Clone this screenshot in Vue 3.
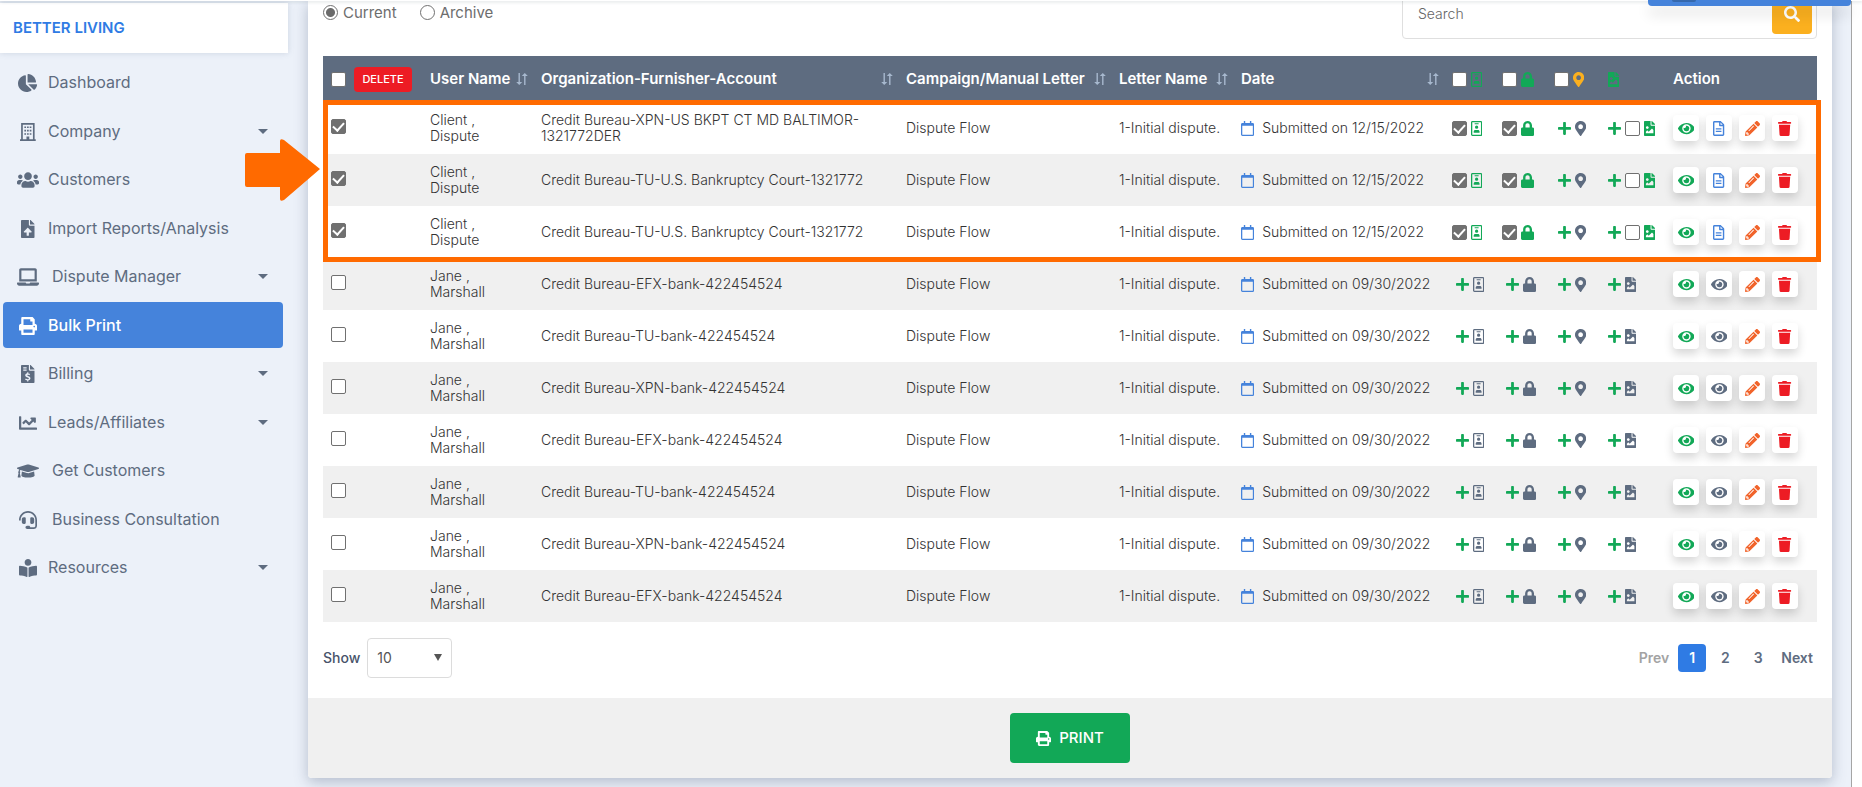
<script setup>
import { reactive, ref } from 'vue'

const icons = {
  pie: ['0 0 544 512', 'M527.79 288H290.5l158.03 158.03c6.04 6.04 15.98 6.53 22.19.68 38.7-36.46 65.32-85.61 73.13-140.86 1.34-9.46-6.51-17.85-16.06-17.85zm-15.83-64.8C503.72 103.74 408.26 8.28 288.8.04 279.68-.59 272 7.1 272 16.24V240h223.77c9.14 0 16.82-7.68 16.19-16.8zM224 288V50.71c0-9.55-8.39-17.4-17.84-16.06C86.99 51.49-4.1 155.6.14 280.37 4.5 408.51 114.83 513.59 243.03 511.98c50.4-.63 96.97-16.87 135.26-44.03 7.9-5.6 8.42-17.23 1.57-24.08L224 288z'],
  building: ['0 0 448 512', 'M32 0h384v464h32v48H0v-48h32zM80 48v416h104v-80h80v80h104V48zM124 96h48v48h-48zm76 0h48v48h-48zm76 0h48v48h-48zM124 192h48v48h-48zm76 0h48v48h-48zm76 0h48v48h-48zM124 288h48v48h-48zm76 0h48v48h-48zm76 0h48v48h-48z'],
  users: ['0 0 640 512', 'M96 224c35.3 0 64-28.7 64-64s-28.7-64-64-64-64 28.7-64 64 28.7 64 64 64zm448 0c35.3 0 64-28.7 64-64s-28.7-64-64-64-64 28.7-64 64 28.7 64 64 64zm32 32h-64c-17.6 0-33.5 7.1-45.1 18.6 40.3 22.1 68.9 62 75.1 109.4h66c17.7 0 32-14.3 32-32v-32c0-35.3-28.7-64-64-64zm-256 0c61.9 0 112-50.1 112-112S381.9 32 320 32 208 82.1 208 144s50.1 112 112 112zm76.8 32h-8.3c-20.8 10-43.9 16-68.5 16s-47.6-6-68.5-16h-8.3C179.6 288 128 339.6 128 403.2V432c0 26.5 21.5 48 48 48h288c26.5 0 48-21.5 48-48v-28.8c0-63.6-51.6-115.2-115.2-115.2zm-223.7-13.4C161.5 263.1 145.6 256 128 256H64c-35.3 0-64 28.7-64 64v32c0 17.7 14.3 32 32 32h65.9c6.3-47.4 34.9-87.3 75.2-109.4z'],
  upload: ['0 0 384 512', 'M224 136V0H24C10.7 0 0 10.7 0 24v464c0 13.3 10.7 24 24 24h336c13.3 0 24-10.7 24-24V160H248c-13.2 0-24-10.8-24-24zm65.18 216.01H224v80c0 8.84-7.16 16-16 16h-32c-8.84 0-16-7.16-16-16v-80H94.82c-14.28 0-21.41-17.29-11.27-27.36l96.42-95.7c6.65-6.61 17.39-6.61 24.04 0l96.42 95.7c10.15 10.07 3.03 27.36-11.25 27.36zM377 105L279.1 7c-4.5-4.5-10.6-7-17-7H256v128h128v-6.1c0-6.3-2.5-12.4-7-16.9z'],
  laptop: ['0 0 640 512', 'M624 416H381.54c-.74 19.81-14.71 32-32.74 32H288c-18.69 0-33.02-17.47-32.77-32H16c-8.8 0-16 7.2-16 16v16c0 35.2 28.8 64 64 64h512c35.2 0 64-28.8 64-64v-16c0-8.8-7.2-16-16-16zM576 48c0-26.4-21.6-48-48-48H112C85.6 0 64 21.6 64 48v336h512V48zm-64 272H128V64h384v256z'],
  print: ['0 0 512 512', 'M448 192V77.25c0-8.49-3.37-16.62-9.37-22.63L393.37 9.37c-6-6-14.14-9.37-22.63-9.37H96C78.33 0 64 14.33 64 32v160c-35.35 0-64 28.65-64 64v112c0 8.84 7.16 16 16 16h48v96c0 17.67 14.33 32 32 32h320c17.67 0 32-14.33 32-32v-96h48c8.84 0 16-7.16 16-16V256c0-35.35-28.65-64-64-64zm-64 256H128v-96h256v96zm0-224H128V64h192v48c0 8.84 7.16 16 16 16h48v96zm48 72c-13.25 0-24-10.75-24-24 0-13.26 10.75-24 24-24s24 10.74 24 24c0 13.25-10.75 24-24 24z'],
  invoice: ['0 0 384 512', 'M224 136V0H24C10.7 0 0 10.7 0 24v464c0 13.3 10.7 24 24 24h336c13.3 0 24-10.7 24-24V160H248c-13.2 0-24-10.8-24-24zM64 64h96v32H64zm0 64h96v32H64zM377 105L279.1 7c-4.5-4.5-10.6-7-17-7H256v128h128v-6.1c0-6.3-2.5-12.4-7-16.9zM176 208h32v32c24 2 40 10 52 18l-22 30c-16-10-30-14-44-14-20 0-30 8-30 18 0 34 104 16 104 86 0 32-24 54-60 60v34h-32v-34c-24-2-46-10-62-24l24-30c16 12 34 20 52 20 22 0 34-8 34-22 0-38-104-20-104-88 0-28 22-50 56-56z'],
  chart: ['0 0 512 512', 'M496 384H64V80c0-8.84-7.16-16-16-16H16C7.16 64 0 71.16 0 80v336c0 17.67 14.33 32 32 32h464c8.84 0 16-7.16 16-16v-32c0-8.84-7.16-16-16-16zM464 96H345.94c-21.38 0-32.09 25.85-16.97 40.97l32.4 32.4L288 242.75l-73.37-73.37c-12.5-12.5-32.76-12.5-45.25 0l-68.69 68.69c-6.25 6.25-6.25 16.38 0 22.63l22.62 22.62c6.25 6.25 16.38 6.25 22.63 0L192 237.25l73.37 73.37c12.5 12.5 32.76 12.5 45.25 0l96-96 32.4 32.4c15.12 15.12 40.97 4.41 40.97-16.97V112c.01-8.84-7.15-16-15.99-16z'],
  cap: ['0 0 640 512', 'M622.34 153.2L343.4 67.5c-15.2-4.67-31.6-4.67-46.79 0L17.66 153.2c-23.54 7.23-23.54 38.36 0 45.59l48.63 14.94c-10.67 13.19-17.23 29.28-17.88 46.9C38.78 266.15 32 276.11 32 288c0 10.78 5.68 19.85 13.86 25.65L20.33 428.53C18.11 438.52 25.71 448 35.94 448h56.11c10.24 0 17.84-9.48 15.62-19.47L82.14 313.65C90.32 307.85 96 298.78 96 288c0-11.57-6.47-21.25-15.66-26.87.76-15.02 8.44-28.3 20.69-36.72L296.6 284.5c9.06 2.78 26.44 6.25 46.79 0l278.95-85.7c23.55-7.24 23.55-38.36 0-45.6zM352.79 315.09c-28.53 8.76-52.84 3.92-65.59 0l-145.02-44.55L128 384c0 35.35 85.96 64 192 64s192-28.65 192-64l-14.18-113.47-145.03 44.56z'],
  headset: ['0 0 512 512', 'M0 272V256C0 115 115 0 256 0s256 115 256 256v160c0 53-43 96-96 96H232c-26 0-48-22-48-48s22-48 48-48h48c18 0 32 10 40 48h96c26 0 48-22 48-48V256C464 141 371 48 256 48S48 141 48 256v16zM136 176h24c18 0 32 14 32 32v128c0 18-14 32-32 32h-24c-31 0-56-25-56-56v-80c0-31 25-56 56-56zM352 176h24c31 0 56 25 56 56v80c0 31-25 56-56 56h-24c-18 0-32-14-32-32V208c0-18 14-32 32-32z'],
  reader: ['0 0 512 512', 'M352 96c0-53.02-42.98-96-96-96s-96 42.98-96 96 42.98 96 96 96 96-42.98 96-96zM233.59 241.1c-59.33-36.32-155.43-46.3-203.79-49.05C13.55 191.13 0 203.51 0 219.14v222.8c0 14.33 11.59 26.28 26.49 27.05 43.66 2.29 131.99 10.68 193.04 41.43 9.37 4.72 20.48-1.71 20.48-11.87V252.56c-.01-4.67-2.32-8.95-6.42-11.46zm248.61-49.05c-48.35 2.74-144.46 12.73-203.78 49.05-4.1 2.51-6.41 6.96-6.41 11.63v245.79c0 10.19 11.14 16.63 20.54 11.9 61.04-30.72 149.32-39.11 192.97-41.4 14.9-.78 26.49-12.73 26.49-27.06V219.14c-.01-15.63-13.56-28.01-29.81-27.09z'],
  lock: ['0 0 448 512', 'M400 224h-24v-72C376 68.2 307.8 0 224 0S72 68.2 72 152v72H48c-26.5 0-48 21.5-48 48v192c0 26.5 21.5 48 48 48h352c26.5 0 48-21.5 48-48V272c0-26.5-21.5-48-48-48zm-104 0H152v-72c0-39.7 32.3-72 72-72s72 32.3 72 72v72z'],
  pin: ['0 0 384 512', 'M172.268 501.67C26.97 291.031 0 269.413 0 192 0 85.961 85.961 0 192 0s192 85.961 192 192c0 77.413-26.97 99.031-172.268 309.67-9.535 13.774-29.93 13.773-39.464 0zM192 272c44.183 0 80-35.817 80-80s-35.817-80-80-80-80 35.817-80 80 35.817 80 80 80z'],
  plus: ['0 0 448 512', 'M416 208H272V64c0-17.67-14.33-32-32-32h-32c-17.67 0-32 14.33-32 32v144H32c-17.67 0-32 14.33-32 32v32c0 17.67 14.33 32 32 32h144v144c0 17.67 14.33 32 32 32h32c17.67 0 32-14.33 32-32V304h144c17.67 0 32-14.33 32-32v-32c0-17.67-14.33-32-32-32z'],
  badge: ['0 0 384 512', 'M48 0h288c26 0 48 22 48 48v416c0 26-22 48-48 48H48c-26 0-48-22-48-48V48C0 22 22 0 48 0zM44 44v424h296V44zM124 78h136v32H124zM192 156a56 56 0 1 1 0 112a56 56 0 1 1 0-112zM92 400v-40c0-32 26-56 56-56h88c30 0 56 24 56 56v40z'],
  fileImage: ['0 0 384 512', 'M384 121.941V128H256V0h6.059a24 24 0 0 1 16.97 7.029l97.941 97.941a24.002 24.002 0 0 1 7.03 16.971zM248 160c-13.2 0-24-10.8-24-24V0H24C10.745 0 0 10.745 0 24v464c0 13.255 10.745 24 24 24h336c13.255 0 24-10.745 24-24V160H248zm-135.455 16c26.51 0 48 21.49 48 48s-21.49 48-48 48-48-21.49-48-48 21.491-48 48-48zm208 240h-256l.485-48.485L104.545 328c4.686-4.686 11.799-4.201 16.485.485L160.545 368 264.06 264.485c4.686-4.686 12.284-4.686 16.971 0L320.545 304v112z'],
  eye: ['0 0 576 512', 'M572.52 241.4C518.29 135.59 410.93 64 288 64S57.68 135.64 3.48 241.41a32.35 32.35 0 0 0 0 29.19C57.71 376.41 165.07 448 288 448s230.32-71.64 284.52-177.41a32.35 32.35 0 0 0 0-29.19zM288 400a144 144 0 1 1 144-144 143.93 143.93 0 0 1-144 144zm0-240a95.31 95.31 0 0 0-25.31 3.79 47.85 47.85 0 0 1-66.9 66.9A95.78 95.78 0 1 0 288 160z'],
  doc: ['0 0 384 512', 'M48 0h196c13 0 25 5 34 14l92 92c9 9 14 21 14 34v324c0 26-22 48-48 48H48c-26 0-48-22-48-48V48C0 22 22 0 48 0zM48 48v416h288V176H232c-13 0-24-11-24-24V48zM256 54v74h74zM96 248h192v40H96zm0 88h192v40H96z'],
  pencil: ['0 0 512 512', 'M497.9 142.1l-46.1 46.1c-4.7 4.7-12.3 4.7-17 0l-111-111c-4.7-4.7-4.7-12.3 0-17l46.1-46.1c18.7-18.7 49.1-18.7 67.9 0l60.1 60.1c18.8 18.7 18.8 49.1 0 67.9zM284.2 99.8L21.6 362.4.4 483.9c-2.9 16.4 11.4 30.6 27.8 27.8l121.5-21.3 262.6-262.6c4.7-4.7 4.7-12.3 0-17l-111-111c-4.8-4.7-12.4-4.7-17.1 0zM124.1 339.9c-5.5-5.5-5.5-14.3 0-19.8l154-154c5.5-5.5 14.3-5.5 19.8 0s5.5 14.3 0 19.8l-154 154c-5.5 5.5-14.3 5.5-19.8 0zM88 424h48v36.3l-64.5 11.3-31.1-31.1L51.7 376H88v48z'],
  trash: ['0 0 448 512', 'M432 32H312l-9.4-18.7A24 24 0 0 0 281.1 0H166.8a23.72 23.72 0 0 0-21.4 13.3L136 32H16A16 16 0 0 0 0 48v32a16 16 0 0 0 16 16h416a16 16 0 0 0 16-16V48a16 16 0 0 0-16-16zM53.2 467a48 48 0 0 0 47.9 45h245.8a48 48 0 0 0 47.9-45L416 128H32z'],
  search: ['0 0 512 512', 'M505 442.7L405.3 343c-4.5-4.5-10.6-7-17-7H372c27.6-35.3 44-79.7 44-128C416 93.1 322.9 0 208 0S0 93.1 0 208s93.1 208 208 208c48.3 0 92.7-16.4 128-44v16.3c0 6.4 2.5 12.5 7 17l99.7 99.7c9.4 9.4 24.6 9.4 33.9 0l28.3-28.3c9.4-9.4 9.4-24.6.1-34zM208 336c-70.7 0-128-57.2-128-128 0-70.7 57.2-128 128-128 70.7 0 128 57.2 128 128 0 70.7-57.2 128-128 128z'],
  calendar: ['0 0 448 512', 'M96 0h48v64h160V0h48v64h48c26 0 48 22 48 48v352c0 26-22 48-48 48H48c-26 0-48-22-48-48V112c0-26 22-48 48-48h48zM44 160v308h360V160z'],
  sort: ['0 0 12 12', 'M2.5 0h1.4v9h2.3L3.2 12 .2 9h2.3zM8.8 0l3 3H9.5v9H8.1V3H5.800z']
}

const Icon = (props) => {
  const [box, d] = icons[props.name]
  return h('svg', { viewBox: box, fill: 'currentColor', 'aria-hidden': 'true' }, [h('path', { d, 'fill-rule': 'evenodd' })])
}
Icon.props = ['name']

const nav = [
  { label: 'Dashboard', icon: 'pie' },
  { label: 'Company', icon: 'building', menu: true },
  { label: 'Customers', icon: 'users' },
  { label: 'Import Reports/Analysis', icon: 'upload' },
  { label: 'Dispute Manager', icon: 'laptop', menu: true, wide: true },
  { label: 'Bulk Print', icon: 'print', active: true },
  { label: 'Billing', icon: 'invoice', menu: true },
  { label: 'Leads/Affiliates', icon: 'chart', menu: true },
  { label: 'Get Customers', icon: 'cap', wide: true },
  { label: 'Business Consultation', icon: 'headset', wide: true },
  { label: 'Resources', icon: 'reader', menu: true }
]

const sortable = ['User Name', 'Organization-Furnisher-Account', 'Campaign/Manual Letter', 'Letter Name', 'Date']

const submitted = (org) => ({ first: 'Client ,', last: 'Dispute', org, date: '12/15/2022', on: true })
const pending = (bureau) => ({ first: 'Jane ,', last: 'Marshall', org: `Credit Bureau-${bureau}-bank-422454524`, date: '09/30/2022', on: false })
const rows = reactive([
  submitted('Credit Bureau-XPN-US BKPT CT MD BALTIMOR-1321772DER'),
  submitted('Credit Bureau-TU-U.S. Bankruptcy Court-1321772'),
  submitted('Credit Bureau-TU-U.S. Bankruptcy Court-1321772'),
  ...['EFX', 'TU', 'XPN', 'EFX', 'TU', 'XPN', 'EFX'].map(pending)
].map((r) => ({ ...r, picked: r.on, withId: r.on, withLock: r.on })))

const view = ref('current')
const pageSize = ref('10')
</script>

<script>
import { h } from 'vue'
</script>

<template>
  <div class="page">
    <div class="topbar"></div>
    <div class="help"><span class="help-dot"></span></div>
    <aside class="sidebar">
      <div class="brand">BETTER LIVING</div>
      <nav>
        <a v-for="n in nav" :key="n.label" href="#" :class="['item', { active: n.active, wide: n.wide }]">
          <span class="item-icon"><Icon :name="n.icon" /></span>
          <span class="item-label">{{ n.label }}</span>
          <span v-if="n.menu" class="caret"></span>
        </a>
      </nav>
    </aside>

    <main class="content">
      <section class="card">
        <div class="body">
          <div class="toolbar">
            <div class="views">
              <label><input v-model="view" type="radio" name="view" value="current" />Current</label>
              <label><input v-model="view" type="radio" name="view" value="archive" />Archive</label>
            </div>
            <form class="search" @submit.prevent>
              <input type="text" placeholder="Search" aria-label="Search" />
              <button type="submit" aria-label="Search"><Icon name="search" /></button>
            </form>
          </div>

          <div class="table-wrap">
            <table>
              <colgroup>
                <col class="c-pick" /><col class="c-user" /><col /><col class="c-camp" /><col class="c-letter" /><col class="c-date" />
                <col class="c-id" /><col class="c-lock" /><col class="c-pin" /><col class="c-file" /><col class="c-act" />
              </colgroup>
              <thead>
                <tr>
                  <th>
                    <span class="set">
                      <input type="checkbox" class="box" aria-label="Select all" />
                      <button type="button" class="delete">DELETE</button>
                    </span>
                  </th>
                  <th v-for="s in sortable" :key="s"><span class="sort">{{ s }}<Icon name="sort" /></span></th>
                  <th><span class="set"><input type="checkbox" class="box" aria-label="All IDs" /><Icon name="badge" class="ic green" /></span></th>
                  <th><span class="set"><input type="checkbox" class="box" aria-label="All SSN" /><Icon name="lock" class="ic green" /></span></th>
                  <th><span class="set shift"><input type="checkbox" class="box" aria-label="All addresses" /><Icon name="pin" class="ic amber" /></span></th>
                  <th><span class="set"><Icon name="fileImage" class="ic green" /></span></th>
                  <th>Action</th>
                </tr>
              </thead>
              <tbody>
                <tr v-for="(r, i) in rows" :key="i">
                  <td><span class="set pick"><input v-model="r.picked" type="checkbox" class="box" :aria-label="`Select row ${i + 1}`" /></span></td>
                  <td>{{ r.first }}<br />{{ r.last }}</td>
                  <td>{{ r.org }}</td>
                  <td>Dispute Flow</td>
                  <td>1-Initial dispute.</td>
                  <td><span class="date"><Icon name="calendar" />Submitted on {{ r.date }}</span></td>
                  <td>
                    <span v-if="r.on" class="set"><input v-model="r.withId" type="checkbox" class="box" aria-label="ID" /><Icon name="badge" class="ic green" /></span>
                    <span v-else class="set indent"><Icon name="plus" class="plus" /><Icon name="badge" class="ic" /></span>
                  </td>
                  <td>
                    <span v-if="r.on" class="set"><input v-model="r.withLock" type="checkbox" class="box" aria-label="SSN" /><Icon name="lock" class="ic green" /></span>
                    <span v-else class="set indent"><Icon name="plus" class="plus" /><Icon name="lock" class="ic" /></span>
                  </td>
                  <td><span class="set"><Icon name="plus" class="plus" /><Icon name="pin" class="ic" /></span></td>
                  <td>
                    <span class="set">
                      <Icon name="plus" class="plus" />
                      <input v-if="r.on" type="checkbox" class="box" aria-label="Document" />
                      <Icon name="fileImage" :class="['ic', { green: r.on }]" />
                    </span>
                  </td>
                  <td>
                    <span class="actions">
                      <button type="button" class="green" aria-label="View"><Icon name="eye" /></button>
                      <button type="button" :class="r.on ? 'blue' : 'slate'" aria-label="Preview"><Icon :name="r.on ? 'doc' : 'eye'" /></button>
                      <button type="button" class="orange" aria-label="Edit"><Icon name="pencil" /></button>
                      <button type="button" class="red" aria-label="Delete"><Icon name="trash" /></button>
                    </span>
                  </td>
                </tr>
              </tbody>
            </table>
            <div class="highlight"></div>
            <svg class="pointer" viewBox="0 0 75 64" aria-hidden="true">
              <path d="M2 15h33V3q0-3 4-1L75 31 39 62q-4 2-4-1V49H2q-2 0-2-2V17q0-2 2-2z" fill="#ff6a00" />
            </svg>
          </div>

          <div class="pager-row">
            <div class="show">
              <label for="size">Show</label>
              <span class="select">
                <select id="size" v-model="pageSize"><option>10</option><option>25</option><option>50</option></select>
              </span>
            </div>
            <nav class="pager" aria-label="Pages">
              <a href="#" class="off">Prev</a>
              <a href="#" class="num on">1</a>
              <a href="#" class="num">2</a>
              <a href="#" class="num">3</a>
              <a href="#">Next</a>
            </nav>
          </div>
        </div>
        <footer class="foot">
          <button type="button" class="print"><Icon name="print" />PRINT</button>
        </footer>
      </section>
    </main>
    <div class="gutter"></div>
  </div>
</template>

<style>
body {
  background: #ecf1f9;
  overflow: hidden;
}
</style>

<style scoped>
.page {
  display: flex;
  position: relative;
  min-height: 100vh;
  overflow: hidden;
  background: #ecf1f9;
  color: #5e6c80;
  font-family: Inter, "Open Sans", sans-serif;
  font-size: 14px;
  line-height: 16px;
}
.page * { box-sizing: border-box; }
button, input, select { font: inherit; margin: 0; }
a { color: inherit; text-decoration: none; }
svg { display: block; flex: none; }

.topbar {
  position: absolute;
  inset: 0 0 auto 0;
  z-index: 3;
  height: 1px;
  background: #fff;
  box-shadow: 0 1px 3px rgba(60, 80, 90, 0.3);
}
.help {
  position: absolute;
  z-index: 4;
  top: 0;
  right: 11px;
  width: 203px;
  height: 6px;
  border-radius: 0 0 4px 4px;
  background: #4583db;
  box-shadow: 0 8px 14px rgba(0, 0, 0, 0.14);
}
.help-dot {
  display: block;
  width: 24px;
  height: 2px;
  margin-left: 24px;
  border-radius: 0 0 12px 12px;
  background: #3568ad;
}

.sidebar {
  flex: none;
  width: 288px;
  padding-top: 3px;
}
.brand {
  height: 50px;
  padding: 0 13px;
  background: #fff;
  box-shadow: 0 0 6px rgba(90, 110, 140, 0.22);
  color: #2f7be4;
  font-size: 15px;
  font-weight: 600;
  line-height: 50px;
}
.sidebar nav { padding: 6px 5px 0 3px; }
.item {
  display: flex;
  align-items: center;
  height: 46px;
  margin-bottom: 3px;
  padding: 0 15px 0 13px;
  border-radius: 4px;
  font-size: 16px;
}
.item:nth-child(even) { margin-bottom: 2px; }
.item-icon {
  display: flex;
  justify-content: center;
  width: 24px;
  margin-right: 8px;
  padding-top: 2px;
}
.item.wide .item-icon { margin-right: 12px; }
.item-icon svg { height: 18px; max-width: 22px; }
.item-label { flex: 1; }
.item.active { background: #4583db; color: #fff; font-weight: 500; }
.caret {
  border: 5px solid transparent;
  border-top-color: currentColor;
  border-bottom: 0;
}

.content {
  flex: 1;
  min-width: 0;
  padding: 0 19px 9px 20px;
}
.gutter {
  flex: none;
  width: 11px;
  border-left: 1px solid #a5a5a5;
  background: #fff;
}
.card {
  border-radius: 0 0 4px 4px;
  background: #fff;
  box-shadow: 0 4px 14px rgba(80, 95, 125, 0.36);
}
.body { padding: 0 15px; }
.toolbar {
  display: flex;
  justify-content: space-between;
  height: 56px;
}
.views {
  display: flex;
  align-items: center;
  gap: 23px;
  height: 25px;
  color: #6d6d6d;
  font-size: 15px;
}
.views label { display: flex; align-items: center; gap: 5px; }
.views input, .box {
  flex: none;
  appearance: none;
  width: 15px;
  height: 15px;
  border: 1px solid #707070;
  background: #fff;
}
.views input { border-radius: 50%; }
.views input:checked { background: radial-gradient(#6b6b6b 0 4px, #fff 5px); }
.search {
  display: flex;
  width: 415px;
  height: 50px;
  margin-top: -11px;
  padding: 4px;
  border: 1px solid #dfdfdf;
  border-radius: 4px;
}
.search input {
  flex: 1;
  min-width: 0;
  padding: 0 11px;
  border: 0;
  outline: 0;
  background: transparent;
  font-weight: 300;
}
.search input::placeholder { color: #666; }
.search button {
  display: flex;
  align-items: center;
  justify-content: center;
  width: 40px;
  border: 0;
  border-radius: 4px;
  background: #fbb01f;
  color: #fff;
}
.search svg { width: 16px; }

.table-wrap { position: relative; }
table {
  width: 100%;
  table-layout: fixed;
  border-collapse: collapse;
  color: #333;
  font-weight: 300;
}
.c-pick { width: 99px; }
.c-user { width: 111px; }
.c-camp { width: 213px; }
.c-letter { width: 122px; }
.c-date { width: 211px; }
.c-id { width: 50px; }
.c-lock { width: 56px; }
.c-pin { width: 50px; }
.c-file { width: 65px; }
.c-act { width: 152px; }
th {
  height: 46px;
  padding: 0 8px;
  background: #5e6c80;
  color: #fff;
  font-size: 15px;
  font-weight: 600;
  text-align: left;
  white-space: nowrap;
}
td { height: 52px; padding: 0 8px; }
tbody tr:nth-child(even) { background: #f0f0f0; }
.set { display: flex; align-items: center; gap: 4px; color: #5e6c80; }
.indent { padding-left: 4px; }
.shift { margin-left: -4px; }
.pick { padding-bottom: 4px; }
.box { border-radius: 2px; }
.box:checked { border-color: #707070; background: #707070; }
.box:checked::after {
  content: "";
  display: block;
  width: 5px;
  height: 9px;
  margin: 0 auto;
  border: solid #fff;
  border-width: 0 2px 2px 0;
  transform: rotate(42deg);
}
.ic { height: 15px; }
.plus { width: 13px; color: #12a857; }
.green { color: #12a857; }
.amber { color: #fbb01f; }
.blue { color: #4583db; }
.slate { color: #5e6c80; }
.orange { color: #f1632a; }
.red { color: #ed1c24; }
.delete {
  width: 58px;
  height: 25px;
  margin-left: 4px;
  padding: 0;
  border: 0;
  border-radius: 4px;
  background: #ed1c24;
  color: #fff;
  font-size: 11px;
  font-weight: 500;
}
.sort { display: flex; align-items: center; justify-content: space-between; }
.sort svg { width: 12px; margin-right: -3px; color: #a7b8ce; }
.date { display: flex; align-items: center; gap: 8px; white-space: nowrap; }
.date svg { height: 15px; color: #4583db; }
.actions { display: flex; gap: 7px; }
.actions button {
  display: flex;
  align-items: center;
  justify-content: center;
  width: 26px;
  height: 26px;
  padding: 0;
  border: 0;
  border-radius: 4px;
  background: #fff;
  box-shadow: 0 5px 10px rgba(0, 0, 0, 0.16);
}
.actions svg { height: 15px; }
.highlight {
  position: absolute;
  top: 44px;
  left: 0;
  right: -4px;
  height: 162px;
  border: 5px solid #ff6a00;
  pointer-events: none;
}
.pointer {
  position: absolute;
  top: 82px;
  left: -78px;
  width: 75px;
  height: 64px;
}

.pager-row {
  display: flex;
  align-items: center;
  justify-content: space-between;
  height: 76px;
  padding-bottom: 4px;
  font-weight: 500;
}
.show { display: flex; align-items: center; gap: 7px; color: #48536a; }
.select { position: relative; }
.select::after {
  content: "";
  position: absolute;
  top: 16px;
  right: 10px;
  border: 4px solid transparent;
  border-top: 7px solid #555;
  border-bottom: 0;
  pointer-events: none;
}
select {
  appearance: none;
  width: 85px;
  height: 40px;
  padding: 0 9px;
  border: 1px solid #dcdcdc;
  border-radius: 4px;
  background: #fff;
  color: #555;
}
.select select { font-weight: 400; }
.pager { display: flex; align-items: center; gap: 5px; padding-right: 4px; font-weight: 600; }
.pager a:first-child { margin-right: 4px; }
.pager a:last-child { margin-left: 4px; }
.off { color: #a3a3a3; }
.num { width: 28px; line-height: 28px; border-radius: 4px; text-align: center; }
.num.on { background: #2f7be4; color: #fff; }

.foot {
  display: flex;
  align-items: center;
  justify-content: center;
  height: 80px;
  border-radius: 0 0 4px 4px;
  background: #f0f0f0;
}
.print {
  display: flex;
  align-items: center;
  justify-content: center;
  gap: 8px;
  width: 120px;
  height: 50px;
  border: 0;
  border-radius: 4px;
  background: #12a857;
  color: #fff;
  font-size: 15px;
  font-weight: 500;
}
.print svg { width: 15px; }
</style>
